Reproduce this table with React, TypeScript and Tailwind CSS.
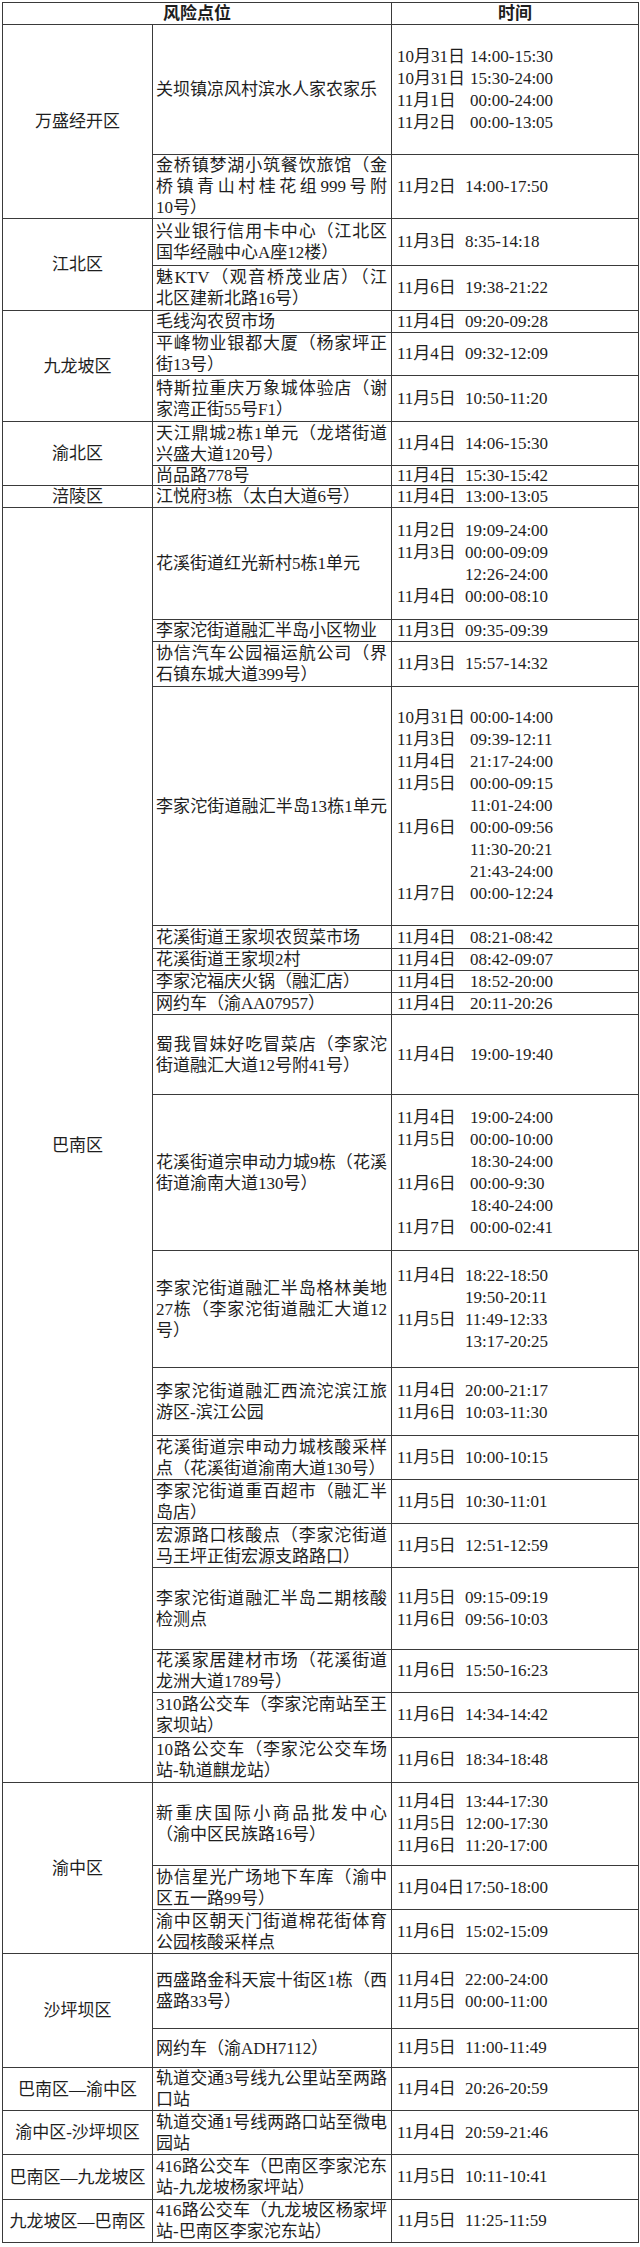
import React from 'react'

type Row = {
  place: string[]
  times: [string, string][]
  h: string
  dw?: string
  full?: boolean
}

type Group = { district: string; rows: Row[] }

const groups: Group[] = [
  {
    district: '万盛经开区',
    rows: [
      {
        place: ['关坝镇凉风村滨水人家农家乐'],
        times: [
          ['10月31日', '14:00-15:30'],
          ['10月31日', '15:30-24:00'],
          ['11月1日', '00:00-24:00'],
          ['11月2日', '00:00-13:05']
        ],
        h: 'h-[130px]',
        dw: 'w-[73px]'
      },
      {
        place: ['金桥镇梦湖小筑餐饮旅馆（金', '桥镇青山村桂花组999号附', '10号）'],
        times: [['11月2日', '14:00-17:50']],
        h: 'h-[64px]'
      }
    ]
  },
  {
    district: '江北区',
    rows: [
      {
        place: ['兴业银行信用卡中心（江北区', '国华经融中心A座12楼）'],
        times: [['11月3日', '8:35-14:18']],
        h: 'h-[47px]'
      },
      {
        place: ['魅KTV（观音桥茂业店）（江', '北区建新北路16号）'],
        times: [['11月6日', '19:38-21:22']],
        h: 'h-[45px]'
      }
    ]
  },
  {
    district: '九龙坡区',
    rows: [
      { place: ['毛线沟农贸市场'], times: [['11月4日', '09:20-09:28']], h: 'h-[22px]' },
      {
        place: ['平峰物业银都大厦（杨家坪正', '街13号）'],
        times: [['11月4日', '09:32-12:09']],
        h: 'h-[43px]'
      },
      {
        place: ['特斯拉重庆万象城体验店（谢', '家湾正街55号F1）'],
        times: [['11月5日', '10:50-11:20']],
        h: 'h-[46px]'
      }
    ]
  },
  {
    district: '渝北区',
    rows: [
      {
        place: ['天江鼎城2栋1单元（龙塔街道', '兴盛大道120号）'],
        times: [['11月4日', '14:06-15:30']],
        h: 'h-[44px]'
      },
      { place: ['尚品路778号'], times: [['11月4日', '15:30-15:42']], h: 'h-[20px]' }
    ]
  },
  {
    district: '涪陵区',
    rows: [{ place: ['江悦府3栋（太白大道6号）'], times: [['11月4日', '13:00-13:05']], h: 'h-[22px]' }]
  },
  {
    district: '巴南区',
    rows: [
      {
        place: ['花溪街道红光新村5栋1单元'],
        times: [
          ['11月2日', '19:09-24:00'],
          ['11月3日', '00:00-09:09'],
          ['', '12:26-24:00'],
          ['11月4日', '00:00-08:10']
        ],
        h: 'h-[112px]'
      },
      { place: ['李家沱街道融汇半岛小区物业'], times: [['11月3日', '09:35-09:39']], h: 'h-[22px]' },
      {
        place: ['协信汽车公园福运航公司（界', '石镇东城大道399号）'],
        times: [['11月3日', '15:57-14:32']],
        h: 'h-[45px]'
      },
      {
        place: ['李家沱街道融汇半岛13栋1单元'],
        full: true,
        times: [
          ['10月31日', '00:00-14:00'],
          ['11月3日', '09:39-12:11'],
          ['11月4日', '21:17-24:00'],
          ['11月5日', '00:00-09:15'],
          ['', '11:01-24:00'],
          ['11月6日', '00:00-09:56'],
          ['', '11:30-20:21'],
          ['', '21:43-24:00'],
          ['11月7日', '00:00-12:24']
        ],
        h: 'h-[239px]',
        dw: 'w-[73px]'
      },
      { place: ['花溪街道王家坝农贸菜市场'], times: [['11月4日', '08:21-08:42']], h: 'h-[23px]', dw: 'w-[73px]' },
      { place: ['花溪街道王家坝2村'], times: [['11月4日', '08:42-09:07']], h: 'h-[22px]', dw: 'w-[73px]' },
      { place: ['李家沱福庆火锅（融汇店）'], times: [['11月4日', '18:52-20:00']], h: 'h-[22px]', dw: 'w-[73px]' },
      { place: ['网约车（渝AA07957）'], times: [['11月4日', '20:11-20:26']], h: 'h-[22px]', dw: 'w-[73px]' },
      {
        place: ['蜀我冒妹好吃冒菜店（李家沱', '街道融汇大道12号附41号）'],
        times: [['11月4日', '19:00-19:40']],
        h: 'h-[80px]',
        dw: 'w-[73px]'
      },
      {
        place: ['花溪街道宗申动力城9栋（花溪', '街道渝南大道130号）'],
        times: [
          ['11月4日', '19:00-24:00'],
          ['11月5日', '00:00-10:00'],
          ['', '18:30-24:00'],
          ['11月6日', '00:00-9:30'],
          ['', '18:40-24:00'],
          ['11月7日', '00:00-02:41']
        ],
        h: 'h-[156px]',
        dw: 'w-[73px]'
      },
      {
        place: ['李家沱街道融汇半岛格林美地', '27栋（李家沱街道融汇大道12', '号）'],
        times: [
          ['11月4日', '18:22-18:50'],
          ['', '19:50-20:11'],
          ['11月5日', '11:49-12:33'],
          ['', '13:17-20:25']
        ],
        h: 'h-[117px]'
      },
      {
        place: ['李家沱街道融汇西流沱滨江旅', '游区-滨江公园'],
        times: [
          ['11月4日', '20:00-21:17'],
          ['11月6日', '10:03-11:30']
        ],
        h: 'h-[68px]'
      },
      {
        place: ['花溪街道宗申动力城核酸采样', '点（花溪街道渝南大道130号）'],
        times: [['11月5日', '10:00-10:15']],
        h: 'h-[44px]'
      },
      {
        place: ['李家沱街道重百超市（融汇半', '岛店）'],
        times: [['11月5日', '10:30-11:01']],
        h: 'h-[44px]'
      },
      {
        place: ['宏源路口核酸点（李家沱街道', '马王坪正街宏源支路路口）'],
        times: [['11月5日', '12:51-12:59']],
        h: 'h-[44px]'
      },
      {
        place: ['李家沱街道融汇半岛二期核酸', '检测点'],
        times: [
          ['11月5日', '09:15-09:19'],
          ['11月6日', '09:56-10:03']
        ],
        h: 'h-[82px]'
      },
      {
        place: ['花溪家居建材市场（花溪街道', '龙洲大道1789号）'],
        times: [['11月6日', '15:50-16:23']],
        h: 'h-[43px]'
      },
      {
        place: ['310路公交车（李家沱南站至王', '家坝站）'],
        times: [['11月6日', '14:34-14:42']],
        h: 'h-[45px]'
      },
      {
        place: ['10路公交车（李家沱公交车场', '站-轨道麒龙站）'],
        times: [['11月6日', '18:34-18:48']],
        h: 'h-[45px]'
      }
    ]
  },
  {
    district: '渝中区',
    rows: [
      {
        place: ['新重庆国际小商品批发中心', '（渝中区民族路16号）'],
        times: [
          ['11月4日', '13:44-17:30'],
          ['11月5日', '12:00-17:30'],
          ['11月6日', '11:20-17:00']
        ],
        h: 'h-[83px]'
      },
      {
        place: ['协信星光广场地下车库（渝中', '区五一路99号）'],
        times: [['11月04日', '17:50-18:00']],
        h: 'h-[44px]'
      },
      {
        place: ['渝中区朝天门街道棉花街体育', '公园核酸采样点'],
        times: [['11月6日', '15:02-15:09']],
        h: 'h-[44px]'
      }
    ]
  },
  {
    district: '沙坪坝区',
    rows: [
      {
        place: ['西盛路金科天宸十街区1栋（西', '盛路33号）'],
        times: [
          ['11月4日', '22:00-24:00'],
          ['11月5日', '00:00-11:00']
        ],
        h: 'h-[75px]'
      },
      { place: ['网约车（渝ADH7112）'], times: [['11月5日', '11:00-11:49']], h: 'h-[39px]' }
    ]
  },
  {
    district: '巴南区—渝中区',
    rows: [
      {
        place: ['轨道交通3号线九公里站至两路', '口站'],
        times: [['11月4日', '20:26-20:59']],
        h: 'h-[43px]'
      }
    ]
  },
  {
    district: '渝中区-沙坪坝区',
    rows: [
      {
        place: ['轨道交通1号线两路口站至微电', '园站'],
        times: [['11月4日', '20:59-21:46']],
        h: 'h-[44px]'
      }
    ]
  },
  {
    district: '巴南区—九龙坡区',
    rows: [
      {
        place: ['416路公交车（巴南区李家沱东', '站-九龙坡杨家坪站）'],
        times: [['11月5日', '10:11-10:41']],
        h: 'h-[45px]'
      }
    ]
  },
  {
    district: '九龙坡区—巴南区',
    rows: [
      {
        place: ['416路公交车（九龙坡区杨家坪', '站-巴南区李家沱东站）'],
        times: [['11月5日', '11:25-11:59']],
        h: 'h-[43px]'
      }
    ]
  }
]

const cellFont = "font-['Liberation_Serif','Noto_Sans_CJK_SC',serif] text-[17px] text-[#1e1e1e]"

// short rows need a tighter line box so they don't grow past the row height
function lineFor(h: string) {
  if (h === 'h-[20px]') return 'leading-[19px]'
  if (h === 'h-[22px]' || h === 'h-[23px]') return 'leading-[21px]'
  return 'leading-[22px]'
}

function Place({ lines, full }: { lines: string[]; full?: boolean }) {
  return (
    <>
      {lines.map((l, i) => {
        const just = full || i < lines.length - 1
        return (
          <div key={i} className={just ? 'text-justify [text-align-last:justify]' : 'text-left'}>
            {l}
          </div>
        )
      })}
    </>
  )
}

function Times({ times, dw, lh }: { times: [string, string][]; dw: string; lh: string }) {
  return (
    <div className={lh}>
      {times.map(([d, t], i) => (
        <div key={i} className="whitespace-nowrap">
          <span className={`inline-block ${dw}`}>{d}</span>
          <span className="inline-block">{t}</span>
        </div>
      ))}
    </div>
  )
}

export default function App() {
  return (
    <div className={`w-[640px] min-h-[2247px] bg-white pl-[2px] pt-[2px] ${cellFont}`}>
      <table className={`w-[636px] table-fixed border-collapse border border-[#3a3a3a] ${cellFont}`}>
        <colgroup>
          <col className="w-[150px]" />
          <col className="w-[239px]" />
          <col className="w-[247px]" />
        </colgroup>
        <thead>
          <tr className="h-[22px]">
            <th colSpan={2} className={`border border-[#3a3a3a] p-0 text-center font-bold leading-[20px] ${cellFont}`}>
              风险点位
            </th>
            <th className={`border border-[#3a3a3a] p-0 text-center font-bold leading-[20px] ${cellFont}`}>时间</th>
          </tr>
        </thead>
        <tbody>
          {groups.map((g) =>
            g.rows.map((r, i) => (
              <tr key={g.district + i} className={r.h}>
                {i === 0 && (
                  <td
                    rowSpan={g.rows.length}
                    className={`border border-[#3a3a3a] px-0 py-0 text-center align-middle leading-[21px] whitespace-nowrap ${cellFont}`}
                  >
                    {g.district}
                  </td>
                )}
                <td
                  className={`border border-[#3a3a3a] py-0 pl-[3px] pr-[4px] align-middle ${
                    r.h === 'h-[20px]' ? 'leading-[19px]' : 'leading-[21px]'
                  } ${cellFont}`}
                >
                  <Place lines={r.place} full={r.full} />
                </td>
                <td className={`border border-[#3a3a3a] py-0 pl-[5px] pr-0 align-middle ${cellFont}`}>
                  <Times times={r.times} dw={r.dw ?? 'w-[68px]'} lh={lineFor(r.h)} />
                </td>
              </tr>
            ))
          )}
        </tbody>
      </table>
    </div>
  )
}
